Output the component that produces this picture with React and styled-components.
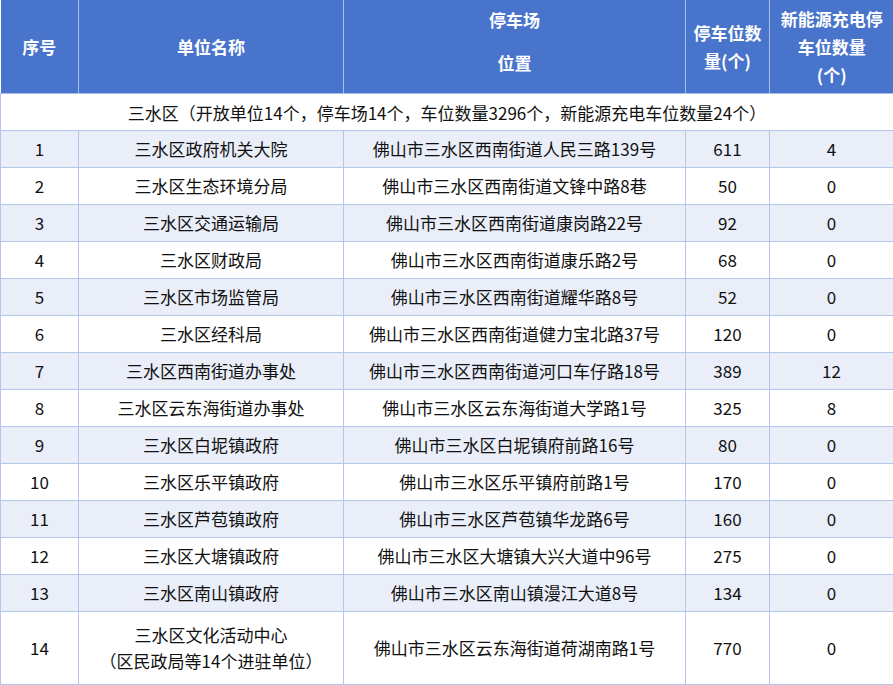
import React from 'react';
import styled, { createGlobalStyle } from 'styled-components';

const GlobalStyle = createGlobalStyle`
  html, body {
    margin: 0;
    padding: 0;
    background: #ffffff;
  }
  body {
    font-family: "Noto Sans CJK SC", "Microsoft YaHei", sans-serif;
  }
`;

const Table = styled.table`
  width: 893px;
  border-collapse: collapse;
  table-layout: fixed;
  font-size: 17px;
  color: #111111;
`;

const HeadCell = styled.th`
  background: #4874cb;
  color: #ffffff;
  font-weight: bold;
  height: 93px;
  padding: 0 2px;
  text-align: center;
  vertical-align: middle;
  line-height: 28px;
  border: 1px solid #a9bfe9;
  border-top: none;
  &:first-child { border-left: none; }
  &:last-child { border-right: none; }
`;

// two-part header label sitting a little above the cell middle
const Stacked = styled.span`
  display: flex;
  flex-direction: column;
  align-items: center;
  gap: 15px;
  margin-bottom: 11px;
`;

const SummaryCell = styled.td`
  height: 36px;
  text-align: center;
  padding: 0;
  background: #ffffff;
  border: 1px solid #b4c7ea;
`;

const Row = styled.tr`
  background: ${p => (p.alt ? '#e9eef8' : '#ffffff')};
`;

const Cell = styled.td`
  height: ${p => (p.tall ? 72 : 36)}px;
  text-align: center;
  padding: 0 4px;
  line-height: 26px;
  border: 1px solid #b4c7ea;
`;

const rows = [
  ['1', '三水区政府机关大院', '佛山市三水区西南街道人民三路139号', '611', '4'],
  ['2', '三水区生态环境分局', '佛山市三水区西南街道文锋中路8巷', '50', '0'],
  ['3', '三水区交通运输局', '佛山市三水区西南街道康岗路22号', '92', '0'],
  ['4', '三水区财政局', '佛山市三水区西南街道康乐路2号', '68', '0'],
  ['5', '三水区市场监管局', '佛山市三水区西南街道耀华路8号', '52', '0'],
  ['6', '三水区经科局', '佛山市三水区西南街道健力宝北路37号', '120', '0'],
  ['7', '三水区西南街道办事处', '佛山市三水区西南街道河口车仔路18号', '389', '12'],
  ['8', '三水区云东海街道办事处', '佛山市三水区云东海街道大学路1号', '325', '8'],
  ['9', '三水区白坭镇政府', '佛山市三水区白坭镇府前路16号', '80', '0'],
  ['10', '三水区乐平镇政府', '佛山市三水区乐平镇府前路1号', '170', '0'],
  ['11', '三水区芦苞镇政府', '佛山市三水区芦苞镇华龙路6号', '160', '0'],
  ['12', '三水区大塘镇政府', '佛山市三水区大塘镇大兴大道中96号', '275', '0'],
  ['13', '三水区南山镇政府', '佛山市三水区南山镇漫江大道8号', '134', '0'],
];

export default function App() {
  return (
    <>
      <GlobalStyle />
      <Table>
        <colgroup>
          <col style={{ width: 78 }} />
          <col style={{ width: 265 }} />
          <col style={{ width: 342 }} />
          <col style={{ width: 84 }} />
          <col style={{ width: 124 }} />
        </colgroup>
        <thead>
          <tr>
            <HeadCell>序号</HeadCell>
            <HeadCell>单位名称</HeadCell>
            <HeadCell>
              <Stacked>
                <span>停车场</span>
                <span>位置</span>
              </Stacked>
            </HeadCell>
            <HeadCell>
              停车位数
              <br />
              量(个)
            </HeadCell>
            <HeadCell>
              新能源充电停
              <br />
              车位数量
              <br />
              (个)
            </HeadCell>
          </tr>
        </thead>
        <tbody>
          <tr>
            <SummaryCell colSpan={5}>
              三水区（开放单位14个，停车场14个，车位数量3296个，新能源充电车位数量24个）
            </SummaryCell>
          </tr>
          {rows.map((r, i) => (
            <Row key={r[0]} alt={i % 2 === 0}>
              {r.map((c, j) => (
                <Cell key={j}>{c}</Cell>
              ))}
            </Row>
          ))}
          <Row>
            <Cell tall>14</Cell>
            <Cell tall>
              三水区文化活动中心
              <br />
              （区民政局等14个进驻单位）
            </Cell>
            <Cell tall>佛山市三水区云东海街道荷湖南路1号</Cell>
            <Cell tall>770</Cell>
            <Cell tall>0</Cell>
          </Row>
        </tbody>
      </Table>
    </>
  );
}
